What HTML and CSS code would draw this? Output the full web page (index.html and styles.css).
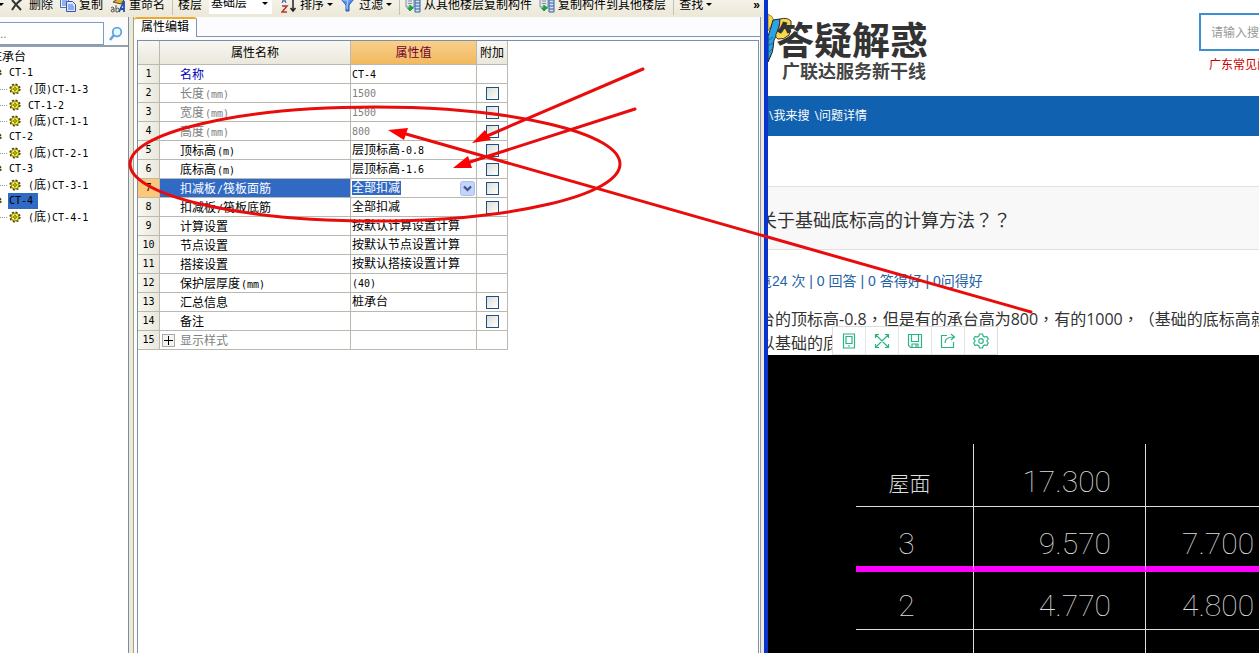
FILE: index.html
```html
<!DOCTYPE html>
<html lang="zh-CN">
<head>
<meta charset="utf-8">
<title>属性编辑</title>
<link rel="stylesheet" href="styles.css">
</head>
<body>
<svg class="defs" aria-hidden="true">
  <symbol id="gear" viewBox="0 0 12 12">
    <circle cx="6" cy="6" r="4.8" fill="none" stroke="#4c4700" stroke-width="1.600" stroke-dasharray="2 1.77"/>
    <circle cx="6" cy="6" r="4" fill="#f7ec3c" stroke="#6c6500" stroke-width=".8"/>
    <path d="M6 2.5v7M2.5 6h7" stroke="#a59b00" stroke-width=".7"/>
    <circle cx="6" cy="6" r="1.3" fill="#fff9a0" stroke="#4c4700" stroke-width=".8"/>
  </symbol>
  <symbol id="sheet" viewBox="0 0 16 16">
    <path d="M1 1h8v9H1z" fill="#dfe3ea" stroke="#8790a0"/>
    <path d="M3 4h4M3 6.500h4" stroke="#8790a0"/>
    <path d="M10 0h5v15h-5z" fill="#cfe0f6" stroke="#35639f"/>
    <path d="M10 3h5M10 6h5M10 9h5M10 12h5" stroke="#35639f"/>
    <path d="M5 8v3h4M5 8v6M2.500 11l2.500 3 3-3z" fill="#22a045" stroke="#22a045"/>
  </symbol>
</svg>
<div class="screen">
  <section class="app">
    <div class="toolbar">
      <i class="caret edge"></i>
      <button class="tool wide"><svg width="12" height="12" viewBox="0 0 12 12"><path d="M1 1l9 10M11 0Q5 4 1 11" fill="none" stroke="#333" stroke-width="2"/></svg>删除</button>
      <button class="tool"><svg width="16" height="14" viewBox="0 0 16 14"><path d="M.5.500h8v9h-8z" fill="#e8f0ff" stroke="#4a6fc0"/><path d="M2 3h5M2 5h5M2 7h4" stroke="#4a6fc0"/><path d="M6.500 3.500h6l3 3v7h-9z" fill="#dce8ff" stroke="#2f58b5"/><path d="M8 7h5M8 9h6M8 11h6" stroke="#4a6fc0"/></svg>复制</button>
      <button class="tool"><svg width="16" height="16" viewBox="0 0 16 16"><path d="M3 5l6-4 5 2-3 4z" fill="#d8b13c" stroke="#59491a"/><path d="M1 11q2-2 3 0v4M4 12q-3 0-3 2 1 2 3 0M6 8v7q4 0 3-3-1-2-3 0" fill="none" stroke="#555"/><path d="M9 15l5-11v11M11 12h3" fill="none" stroke="#204fb0" stroke-width="1.800"/></svg>重命名</button>
      <i class="sep"></i>
      <label for="floor">楼层</label>
      <span class="combo"><select id="floor"><option>基础层</option></select><i class="caret"></i></span>
      <button class="tool menu"><svg width="16" height="16" viewBox="0 0 16 16"><path d="M1 6l2-5 2 5M2 4h2" fill="none" stroke="#3355b0"/><path d="M1 9h5l-5 6h5" fill="none" stroke="#b5362c" stroke-width="1.500"/><path d="M12 0v14M9.500 11l2.500 3 2.500-3" fill="none" stroke="#222" stroke-width="1.500"/></svg>排序<i class="caret"></i></button>
      <button class="tool"><svg width="16" height="14" viewBox="0 0 16 14"><path d="M1 1h13L9 7v6H6V7z" fill="#5794ee" stroke="#2357b5"/><path d="M3 2h5l-1 5v4" fill="none" stroke="#b9d6ff"/></svg>过滤<i class="caret"></i></button>
      <i class="sep"></i>
      <button class="tool"><svg width="16" height="16"><use href="#sheet"/></svg>从其他楼层复制构件</button>
      <button class="tool"><svg width="16" height="16"><use href="#sheet"/></svg>复制构件到其他楼层</button>
      <i class="sep"></i>
      <button class="tool">查找<i class="caret"></i></button>
      <button class="more" aria-label="更多">»</button>
    </div>
    <div class="work">
      <aside class="side">
        <div class="find">
          <input type="text" aria-label="搜索构件" placeholder="..">
          <button aria-label="搜索"><svg width="16" height="16" viewBox="0 0 16 16"><circle cx="9" cy="6" r="4.300" fill="#eef8ff" stroke="#5aa7e0" stroke-width="1.800"/><path d="M6 9l-4 5" stroke="#5aa7e0" stroke-width="2.500"/></svg></button>
        </div>
        <ul class="tree">
          <li class="root">桩承台</li>
          <li class="node"><svg><use href="#gear"/></svg><span class="lat">CT-1</span></li>
          <li class="leaf"><svg><use href="#gear"/></svg><span><b class="lat">(</b>顶<b class="lat">)CT-1-3</b></span></li>
          <li class="leaf"><svg><use href="#gear"/></svg><span><b class="lat">CT-1-2</b></span></li>
          <li class="leaf"><svg><use href="#gear"/></svg><span><b class="lat">(</b>底<b class="lat">)CT-1-1</b></span></li>
          <li class="node"><svg><use href="#gear"/></svg><span class="lat">CT-2</span></li>
          <li class="leaf"><svg><use href="#gear"/></svg><span><b class="lat">(</b>底<b class="lat">)CT-2-1</b></span></li>
          <li class="node"><svg><use href="#gear"/></svg><span class="lat">CT-3</span></li>
          <li class="leaf"><svg><use href="#gear"/></svg><span><b class="lat">(</b>底<b class="lat">)CT-3-1</b></span></li>
          <li class="node picked"><svg><use href="#gear"/></svg><span class="lat">CT-4</span></li>
          <li class="leaf"><svg><use href="#gear"/></svg><span><b class="lat">(</b>底<b class="lat">)CT-4-1</b></span></li>
        </ul>
      </aside>
      <div class="splitter"></div>
      <main class="panel">
        <div class="tabs"><button class="tab">属性编辑</button><span class="rest"></span></div>
        <div class="sheet">
          <table class="props">
            <colgroup><col class="c-num"><col class="c-name"><col class="c-val"><col class="c-add"></colgroup>
            <thead><tr><th></th><th>属性名称</th><th class="hot">属性值</th><th>附加</th></tr></thead>
            <tbody>
              <tr><th>1</th><td class="key">名称</td><td><b class="lat">CT-4</b></td><td></td></tr>
              <tr class="dim"><th>2</th><td>长度<b class="lat">(mm)</b></td><td><b class="lat">1500</b></td><td><input type="checkbox" aria-label="长度附加"></td></tr>
              <tr class="dim"><th>3</th><td>宽度<b class="lat">(mm)</b></td><td><b class="lat">1500</b></td><td><input type="checkbox" aria-label="宽度附加"></td></tr>
              <tr class="dim"><th>4</th><td>高度<b class="lat">(mm)</b></td><td><b class="lat">800</b></td><td><input type="checkbox" aria-label="高度附加"></td></tr>
              <tr><th>5</th><td>顶标高<b class="lat">(m)</b></td><td>层顶标高<b class="lat">-0.8</b></td><td><input type="checkbox" aria-label="顶标高附加"></td></tr>
              <tr><th>6</th><td>底标高<b class="lat">(m)</b></td><td>层顶标高<b class="lat">-1.6</b></td><td><input type="checkbox" aria-label="底标高附加"></td></tr>
              <tr class="current"><th>7</th><td>扣减板<b class="lat">/</b>筏板面筋</td><td class="editing"><div class="editor"><select aria-label="扣减板/筏板面筋"><option>全部扣减</option></select><svg width="15" height="15" viewBox="0 0 15 15"><rect x=".5" y=".5" width="14" height="14" rx="2" fill="#c3d3fc" stroke="#a9bdf0"/><path d="M4 5.500l3.500 3.500L11 5.500" fill="none" stroke="#3c527f" stroke-width="2.200"/></svg></div></td><td><input type="checkbox" aria-label="面筋附加"></td></tr>
              <tr><th>8</th><td>扣减板<b class="lat">/</b>筏板底筋</td><td>全部扣减</td><td><input type="checkbox" aria-label="底筋附加"></td></tr>
              <tr><th>9</th><td>计算设置</td><td>按默认计算设置计算</td><td></td></tr>
              <tr><th>10</th><td>节点设置</td><td>按默认节点设置计算</td><td></td></tr>
              <tr><th>11</th><td>搭接设置</td><td>按默认搭接设置计算</td><td></td></tr>
              <tr><th>12</th><td>保护层厚度<b class="lat">(mm)</b></td><td><b class="lat">(40)</b></td><td></td></tr>
              <tr><th>13</th><td>汇总信息</td><td>桩承台</td><td><input type="checkbox" aria-label="汇总信息附加"></td></tr>
              <tr><th>14</th><td>备注</td><td></td><td><input type="checkbox" aria-label="备注附加"></td></tr>
              <tr class="dim group"><th>15</th><td><button aria-label="展开"><svg width="9" height="9"><path d="M0 4.500h9M4.500 0v9" stroke="#000"/></svg></button>显示样式</td><td></td><td></td></tr>
            </tbody>
          </table>
        </div>
      </main>
      <div class="frame"></div>
    </div>
  </section>
  <section class="web">
    <header class="head">
      <div class="brand">
        <svg class="mascot" width="24" height="60" viewBox="0 0 24 60">
          <path d="M0 2q5 2 6 7l-6 10z" fill="#f8d94a" stroke="#a48520"/>
          <path d="M5 8l7-1q0 7-3 14-1 4-3 7 0 12-6 22V24q3-8 5-16z" fill="#2aa3e8" stroke="#222"/>
          <path d="M12 7q7-2 11 2 1 8-2 14-5 5-11 4-4-2-1-7 3-5 3-13z" fill="#f8d94a" stroke="#333"/>
          <path d="M0 34l6-4M0 41l5-5M1 28l4-3" fill="none" stroke="#14639a"/>
        </svg>
        <div class="names"><span class="big">答疑解惑</span><span class="small">广联达服务新干线</span></div>
      </div>
      <div class="query">
        <input type="text" aria-label="搜索问题" placeholder="请输入搜索内容">
        <a href="#">广东常见问题</a>
      </div>
    </header>
    <nav class="nav"><a href="#">\我来搜</a> <a href="#">\问题详情</a></nav>
    <h1 class="title">关于基础底标高的计算方法<span class="mid" lang="zh-TW">？？</span></h1>
    <div class="stats">览24 次 | 0 回答 | 0 答得好 | 0问得好</div>
    <div class="text">
      <p>台的顶标高-0.8<span class="mid" lang="zh-TW">，</span>但是有的承台高为800<span class="mid" lang="zh-TW">，</span>有的1000<span class="mid" lang="zh-TW">，</span>（基础的底标高就</p>
      <p>以基础的底</p>
      <div class="float">
        <button aria-label="手机"><svg viewBox="0 0 16 16"><path d="M2.500 1h11v14h-11zM5 3.500h6v7H5zM7 13h2"/></svg></button>
        <button aria-label="全屏"><svg viewBox="0 0 16 16"><path d="M2 2l12 12M14 2L2 14M1.500 5V1.500H5M11 1.500h3.500V5M14.500 11v3.500H11M5 14.500H1.500V11"/></svg></button>
        <button aria-label="保存"><svg viewBox="0 0 16 16"><path d="M1.500 1.500h13v13h-11l-2-2zM4.500 1.500v7h7v-7M5 14v-3h6v3M9 11v3"/></svg></button>
        <button aria-label="分享"><svg viewBox="0 0 16 16"><path d="M7 2.500H1.500v12h12V9M5 10q0-6 9-6M11 1l3.500 3L11 7"/></svg></button>
        <button aria-label="设置"><svg viewBox="0 0 16 16"><path d="M6.500 1h3l.6 2 1.700 1 2-.5L15.300 6l-1.500 2 1.500 2-1.500 2.500-2-.5-1.700 1-.6 2h-3l-.6-2-1.700-1-2 .5L.7 10l1.500-2L.7 6l1.500-2.500 2 .5 1.700-1z"/><circle cx="8" cy="8" r="2.300"/></svg></button>
      </div>
    </div>
    <div class="cad">
      <table>
        <colgroup><col class="k1"><col class="k2"><col></colgroup>
        <tr class="r1"><td class="cn">屋面</td><td>17.300</td><td></td></tr>
        <tr class="r2"><td>3</td><td>9.570</td><td>7.700</td></tr>
        <tr class="r3"><td>2</td><td>4.770</td><td>4.800</td></tr>
        <tr class="r4"><td></td><td></td><td></td></tr>
      </table>
    </div>
  </section>
  <svg class="marks" aria-hidden="true">
    <g fill="none" stroke="#e80c0c" stroke-width="3" stroke-linecap="round">
      <ellipse cx="375" cy="164" rx="245" ry="57"/>
      <path d="M643 69L487 136M635 109L470 162M1031 312L406 134"/>
    </g>
    <path d="M472 143l13-13 6 10zM453 168l15-12 4 12zM388 130l20-2-4 12z" fill="#f00"/>
  </svg>
</div>
</body>
</html>
```
FILE: styles.css
```css
* { box-sizing: border-box; }
body { margin: 0; font: 12px/16px "Liberation Sans", "Noto Sans CJK SC", sans-serif; color: #000; background: #fff; }
button, input, select { font: inherit; color: inherit; margin: 0; padding: 0; border: 0; background: none; border-radius: 0; }
a { color: inherit; text-decoration: none; }
svg { flex: none; }
.defs { position: absolute; width: 0; height: 0; }
.lat { font-family: "DejaVu Sans Mono", monospace; font-size: 10px; line-height: 10px; font-weight: 400; }
.mid { font-family: "Noto Sans CJK TC", sans-serif; line-height: 1; }

.screen { position: relative; display: flex; height: 100vh; overflow: hidden; }
.marks { position: absolute; left: 0; top: 0; width: 100%; height: 100%; pointer-events: none; }

/* Desktop application */
.app { flex: none; width: 61%; display: flex; flex-direction: column; border-right: 4px solid #0a32cc; overflow: hidden; }
.toolbar { flex: none; display: flex; align-items: center; gap: 7px; height: 17px; padding-bottom: 8px; overflow: hidden; white-space: nowrap; background: linear-gradient(#f4f2e8, #ebe8d8); }
.tool { display: flex; align-items: center; gap: 3px; }
.tool.wide { gap: 6px; }
.tool.menu { padding-left: 2px; }
.caret { flex: none; width: 6px; border: 3px solid transparent; border-top-color: #000; border-bottom: 0; }
.caret.edge { margin-left: -2px; }
.sep { flex: none; width: 1px; height: 20px; margin-right: -2px; background: #c5c2b2; }
.combo { display: flex; align-items: center; justify-content: space-between; width: 63px; height: 18px; padding: 0 4px 3px 2px; background: #fff; }
.combo select, .editor select { appearance: none; }
.more { margin-left: auto; padding-right: 4px; font-weight: 700; }

.work { flex: 1; display: flex; min-height: 0; }
.side { flex: none; width: 129px; border-right: 1px solid #7b8ca5; overflow: hidden; }
.find { display: flex; height: 30px; padding-top: 5px; background: #fcfcfd; border-bottom: 2px solid #929fae; }
.find input { width: 104px; border: 1px solid #7f9db9; border-left: 0; background: #fff; }
.find button { flex: 1; display: grid; place-items: center; }
.tree { margin: 0; padding: 2px 0; list-style: none; white-space: nowrap; }
.tree li { display: flex; align-items: center; height: 16px; }
.tree svg { width: 12px; height: 12px; }
.tree .root { margin-left: -10px; }
.tree .node svg { margin-left: -10px; }
.tree .node span { margin-left: 6px; padding: 0 5px 0 1px; line-height: 16px; }
.tree .picked span { background: #316ac5; }
.tree .leaf::before { content: ""; width: 7px; margin-right: 2px; border-top: 1px dotted #999; }
.tree .leaf span { margin-left: 7px; }
.splitter { flex: none; width: 5px; background: #ece9d8; border-right: 1px solid #a5a28c; }
.panel { flex: 1; min-width: 0; display: flex; flex-direction: column; background: #fcfcfe; }
.tabs { display: flex; height: 20px; }
.tab { width: 63px; padding-bottom: 2px; background: #fff; border-top: 2px solid #f0a92c; border-right: 1px solid #7b97b5; border-radius: 3px 3px 0 0; }
.rest { flex: 1; border-bottom: 1px solid #7b97b5; }
.sheet { flex: 1; margin: 3px 1px 0 3px; border: 1px solid #7b8fa8; border-bottom: 0; background: #fff; }
.frame { flex: none; width: 4px; background: #ece9d8; border-left: 1px solid #8f9aa8; }

.props { width: 370px; table-layout: fixed; border-collapse: separate; border-spacing: 0; }
.c-num { width: 22px; }
.c-name { width: 191px; }
.c-val { width: 126px; }
.c-add { width: 31px; }
.props th, .props td { height: 19px; padding: 0; border-right: 1px solid #b9b9b0; border-bottom: 1px solid #b9b9b0; line-height: 16px; white-space: nowrap; }
.props th { font-weight: 400; background: linear-gradient(#f8f7f1, #eae8dc); }
.props thead th { height: 24px; }
.props thead .hot { color: #700030; background: linear-gradient(#f8cf8c, #f2b95d); }
.props tbody th { font-family: "DejaVu Sans Mono", monospace; font-size: 10px; background: linear-gradient(90deg, #f8f7f1, #eae8dc); }
.props td:nth-child(2) { padding: 2px 0 0 20px; }
.props td:nth-child(2) .lat { margin-left: 1px; }
.props td:nth-child(3) { padding-left: 1px; }
.props td:nth-child(4) { text-align: center; }
.props .key { color: #0000b8; }
.props .dim td { color: #808080; }
.props .current th { background: #fbc779; }
.props .current td:nth-child(2) { color: #fff; background: #316ac5; }
.props input { appearance: none; display: block; width: 13px; height: 13px; margin: 0 auto; border: 1px solid #1c5180; background: linear-gradient(135deg, #dcdcd7, #fff); }
.editor { display: flex; align-items: center; justify-content: space-between; height: 16px; padding-right: 1px; }
.editor select { height: 14px; line-height: 14px; color: #fff; background: #316ac5; }
.props .group td:nth-child(2) { padding-left: 2px; }
.group button { display: inline-grid; place-items: center; width: 13px; height: 13px; margin: -2px 5px 0 0; vertical-align: middle; border: 1px solid #aaa; background: #f4f4f0; }

/* Question page */
.web { flex: 1; min-width: 0; overflow: hidden; font-family: "Open Sans", "Noto Sans CJK SC", sans-serif; color: #333; white-space: nowrap; text-spacing-trim: space-all; }
.head { display: flex; justify-content: space-between; height: 96px; }
.brand { display: flex; padding-top: 12px; }
.names { display: flex; flex-direction: column; margin-left: -16px; padding-top: 6px; font-weight: 700; font-family: "Noto Sans CJK SC", sans-serif; }
.big { font-size: 38px; line-height: 40px; font-weight: 700; }
.small { padding-left: 6px; font-size: 18px; line-height: 24px; color: #444; }
.query { flex: none; width: 60px; padding-top: 13px; }
.query input { display: block; width: 300px; height: 38px; padding-left: 10px; border: 2px solid #3d8fd0; background: #fff; }
.query input::placeholder { color: #999; opacity: 1; }
.query a { display: block; padding: 6px 0 0 10px; color: #c00; }
.nav { height: 40px; line-height: 40px; padding-left: 1px; color: #fff; background: #1062b1; }
.nav a + a { margin-left: 2px; }
.title { margin: 50px 0 0; height: 64px; line-height: 66px; font-size: 18px; font-weight: 400; text-indent: -9px; background: #f8f8f8; border: solid #dfe2e4; border-width: 1px 0; }
.stats { margin-top: 20px; line-height: 22px; font-family: "Liberation Sans", "Noto Sans CJK SC", sans-serif; font-size: 14px; text-indent: -10px; color: #2563a5; }
.text { position: relative; height: 63px; padding-top: 15px; font-size: 16px; line-height: 24px; overflow: hidden; }
.text p { margin: 0 0 0 -9px; }
.float { position: absolute; left: 64px; bottom: 0; display: flex; border: 1px solid #ddd; background: #fff; }
.float button { display: grid; place-items: center; width: 33px; height: 27px; border-right: 1px solid #e4e4e4; }
.float button:last-child { width: 32px; border-right: 0; }
.float svg { width: 16px; height: 16px; fill: none; stroke: #2bb583; stroke-width: 1.2; }

.cad { height: 100%; padding: 89px 0 0 88px; background: #000; color: #ddd; }
.cad table { width: 100%; table-layout: fixed; border-collapse: separate; border-spacing: 0; font: 100 30px/36px Roboto, sans-serif; }
.k1 { width: 118px; }
.k2 { width: 172px; }
.cad td { padding: 0 34px; border-right: 1px solid #ddd; border-bottom: 1px solid #ddd; text-align: right; }
.cad td:first-child { padding: 0 16px 0 0; text-align: center; }
.cad td:last-child { padding: 0 0 0 36px; text-align: left; border-right: 0; }
.cad td.cn:first-child { padding-right: 10px; font: 300 21px/30px "Noto Sans CJK SC", sans-serif; }
.cad .r1 td { height: 63px; padding-top: 14px; }
.cad .r2 td { height: 65px; padding-top: 14px; border-bottom: 6px solid #f0f; }
.cad .r3 td { height: 58px; padding-top: 10px; }
.cad .r4 td { height: 80px; border-bottom: 0; }
```
